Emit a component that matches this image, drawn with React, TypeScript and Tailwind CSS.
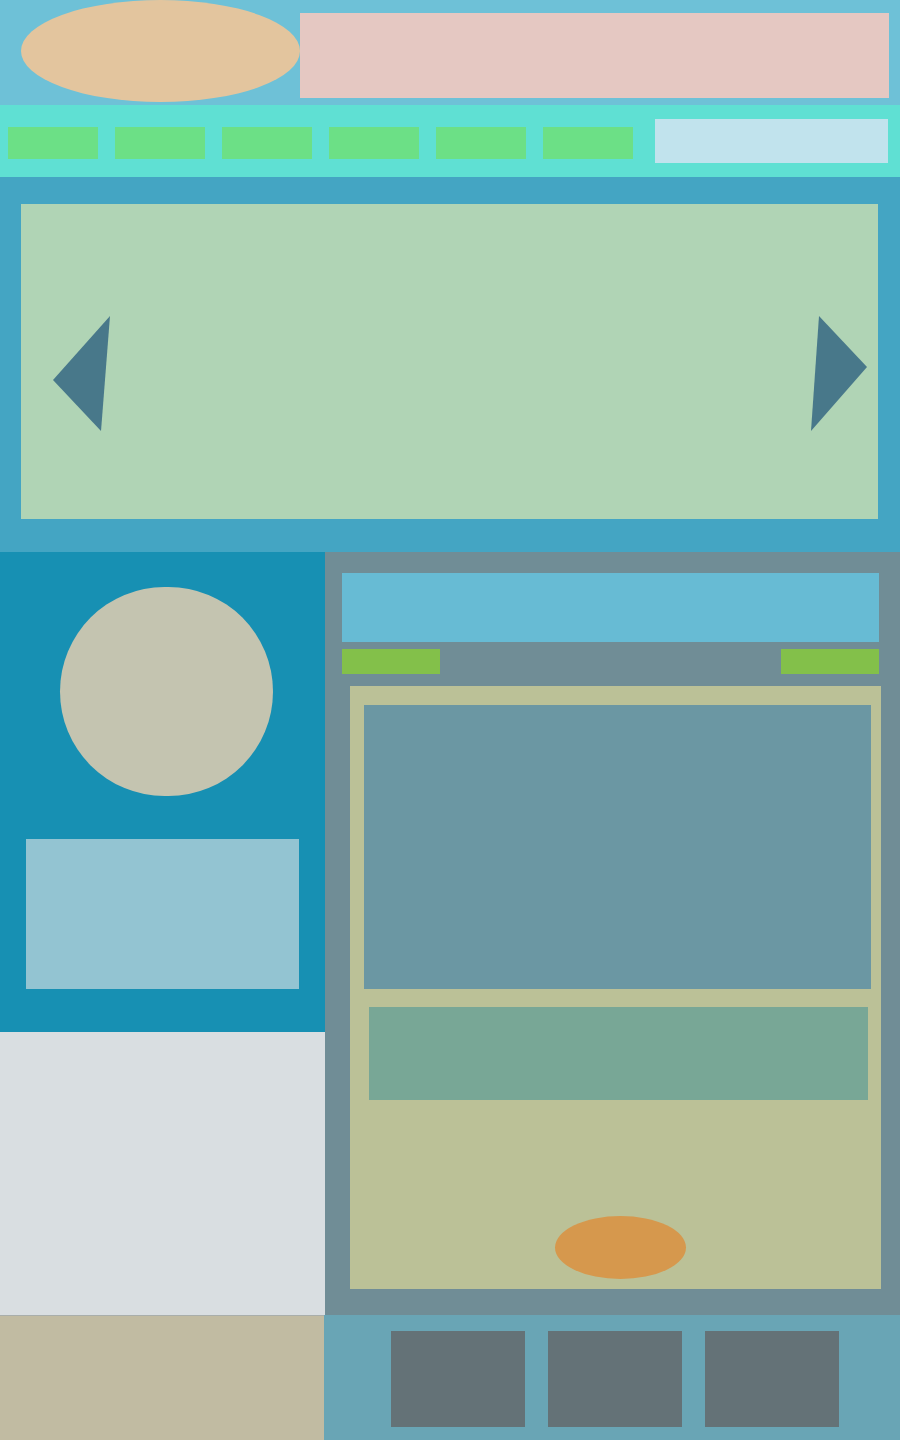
export default function App(): React.JSX.Element {
  return (
    <div className="flex h-[1440px] w-[900px] flex-col overflow-hidden">
      {/* top header */}
      <header className="flex h-[105px] items-start bg-[#6ec1d7] pl-[21px] pr-[11px]">
        <div className="h-[102px] w-[279px] rounded-[50%] bg-[#e3c59e]" />
        <div className="mt-[13px] h-[85px] flex-1 bg-[#e5c8c2]" />
      </header>

      {/* nav */}
      <nav aria-label="Principal" className="flex h-[72px] items-center bg-[#5fe0d3] pl-[8px] pr-[12px]">
        <div className="mt-[4px] flex gap-[17px]">
          {[0, 1, 2, 3, 4, 5].map((i) => (
            <div key={i} className="h-[32px] w-[90px] bg-[#6ce086]" />
          ))}
        </div>
        <div className="ml-auto h-[44px] w-[233px] bg-[#c1e3ed]" />
      </nav>

      {/* hero carousel */}
      <section className="flex h-[375px] bg-[#44a5c3] pb-[33px] pl-[21px] pr-[22px] pt-[27px]">
        <div className="flex flex-1 items-start justify-between bg-[#b0d4b5] pl-[32px] pr-[11px] pt-[112px]">
          <svg width="57" height="115" viewBox="0 0 57 115" aria-hidden>
            <polygon points="57,0 0,64 48,115" fill="#48788a" />
          </svg>
          <svg width="56" height="115" viewBox="0 0 56 115" aria-hidden>
            <polygon points="8,0 56,51 0,115" fill="#48788a" />
          </svg>
        </div>
      </section>

      {/* main */}
      <main className="flex h-[763px]">
        <aside className="flex w-[325px] flex-col">
          <div className="flex h-[480px] flex-col bg-[#1790b3]">
            <div className="ml-[60px] mt-[35px] h-[209px] w-[213px] rounded-full bg-[#c4c4b0]" />
            <div className="ml-[26px] mt-[43px] h-[150px] w-[273px] bg-[#93c4d2]" />
          </div>
          <div className="flex-1 bg-[#d9dee1]" />
        </aside>

        <div className="flex flex-1 flex-col bg-[#708d96] pt-[21px]">
          <div className="ml-[17px] mr-[21px] h-[69px] bg-[#67bbd4]" />
          <div className="ml-[17px] mr-[21px] mt-[7px] flex h-[25px] justify-between">
            <div className="w-[98px] bg-[#83c04a]" />
            <div className="w-[98px] bg-[#83c04a]" />
          </div>
          <article className="mb-[26px] ml-[25px] mr-[19px] mt-[12px] flex flex-1 flex-col bg-[#bbc197] pt-[19px]">
            <div className="ml-[14px] mr-[10px] h-[284px] bg-[#6b97a3]" />
            <div className="ml-[19px] mr-[13px] mt-[18px] h-[93px] bg-[#78a796]" />
            <div className="ml-[205px] mt-[116px] h-[63px] w-[131px] rounded-[50%] bg-[#d6984d]" />
          </article>
        </div>
      </main>

      {/* footer */}
      <footer className="flex h-[125px]">
        <div className="w-[324px] border-t border-[#a9aeab] bg-[#c1bba2]" />
        <div className="flex flex-1 gap-[23px] bg-[#69a5b5] pl-[67px] pt-[16px]">
          {[0, 1, 2].map((i) => (
            <div key={i} className="h-[96px] w-[134px] bg-[#647277]" />
          ))}
        </div>
      </footer>
    </div>
  );
}
